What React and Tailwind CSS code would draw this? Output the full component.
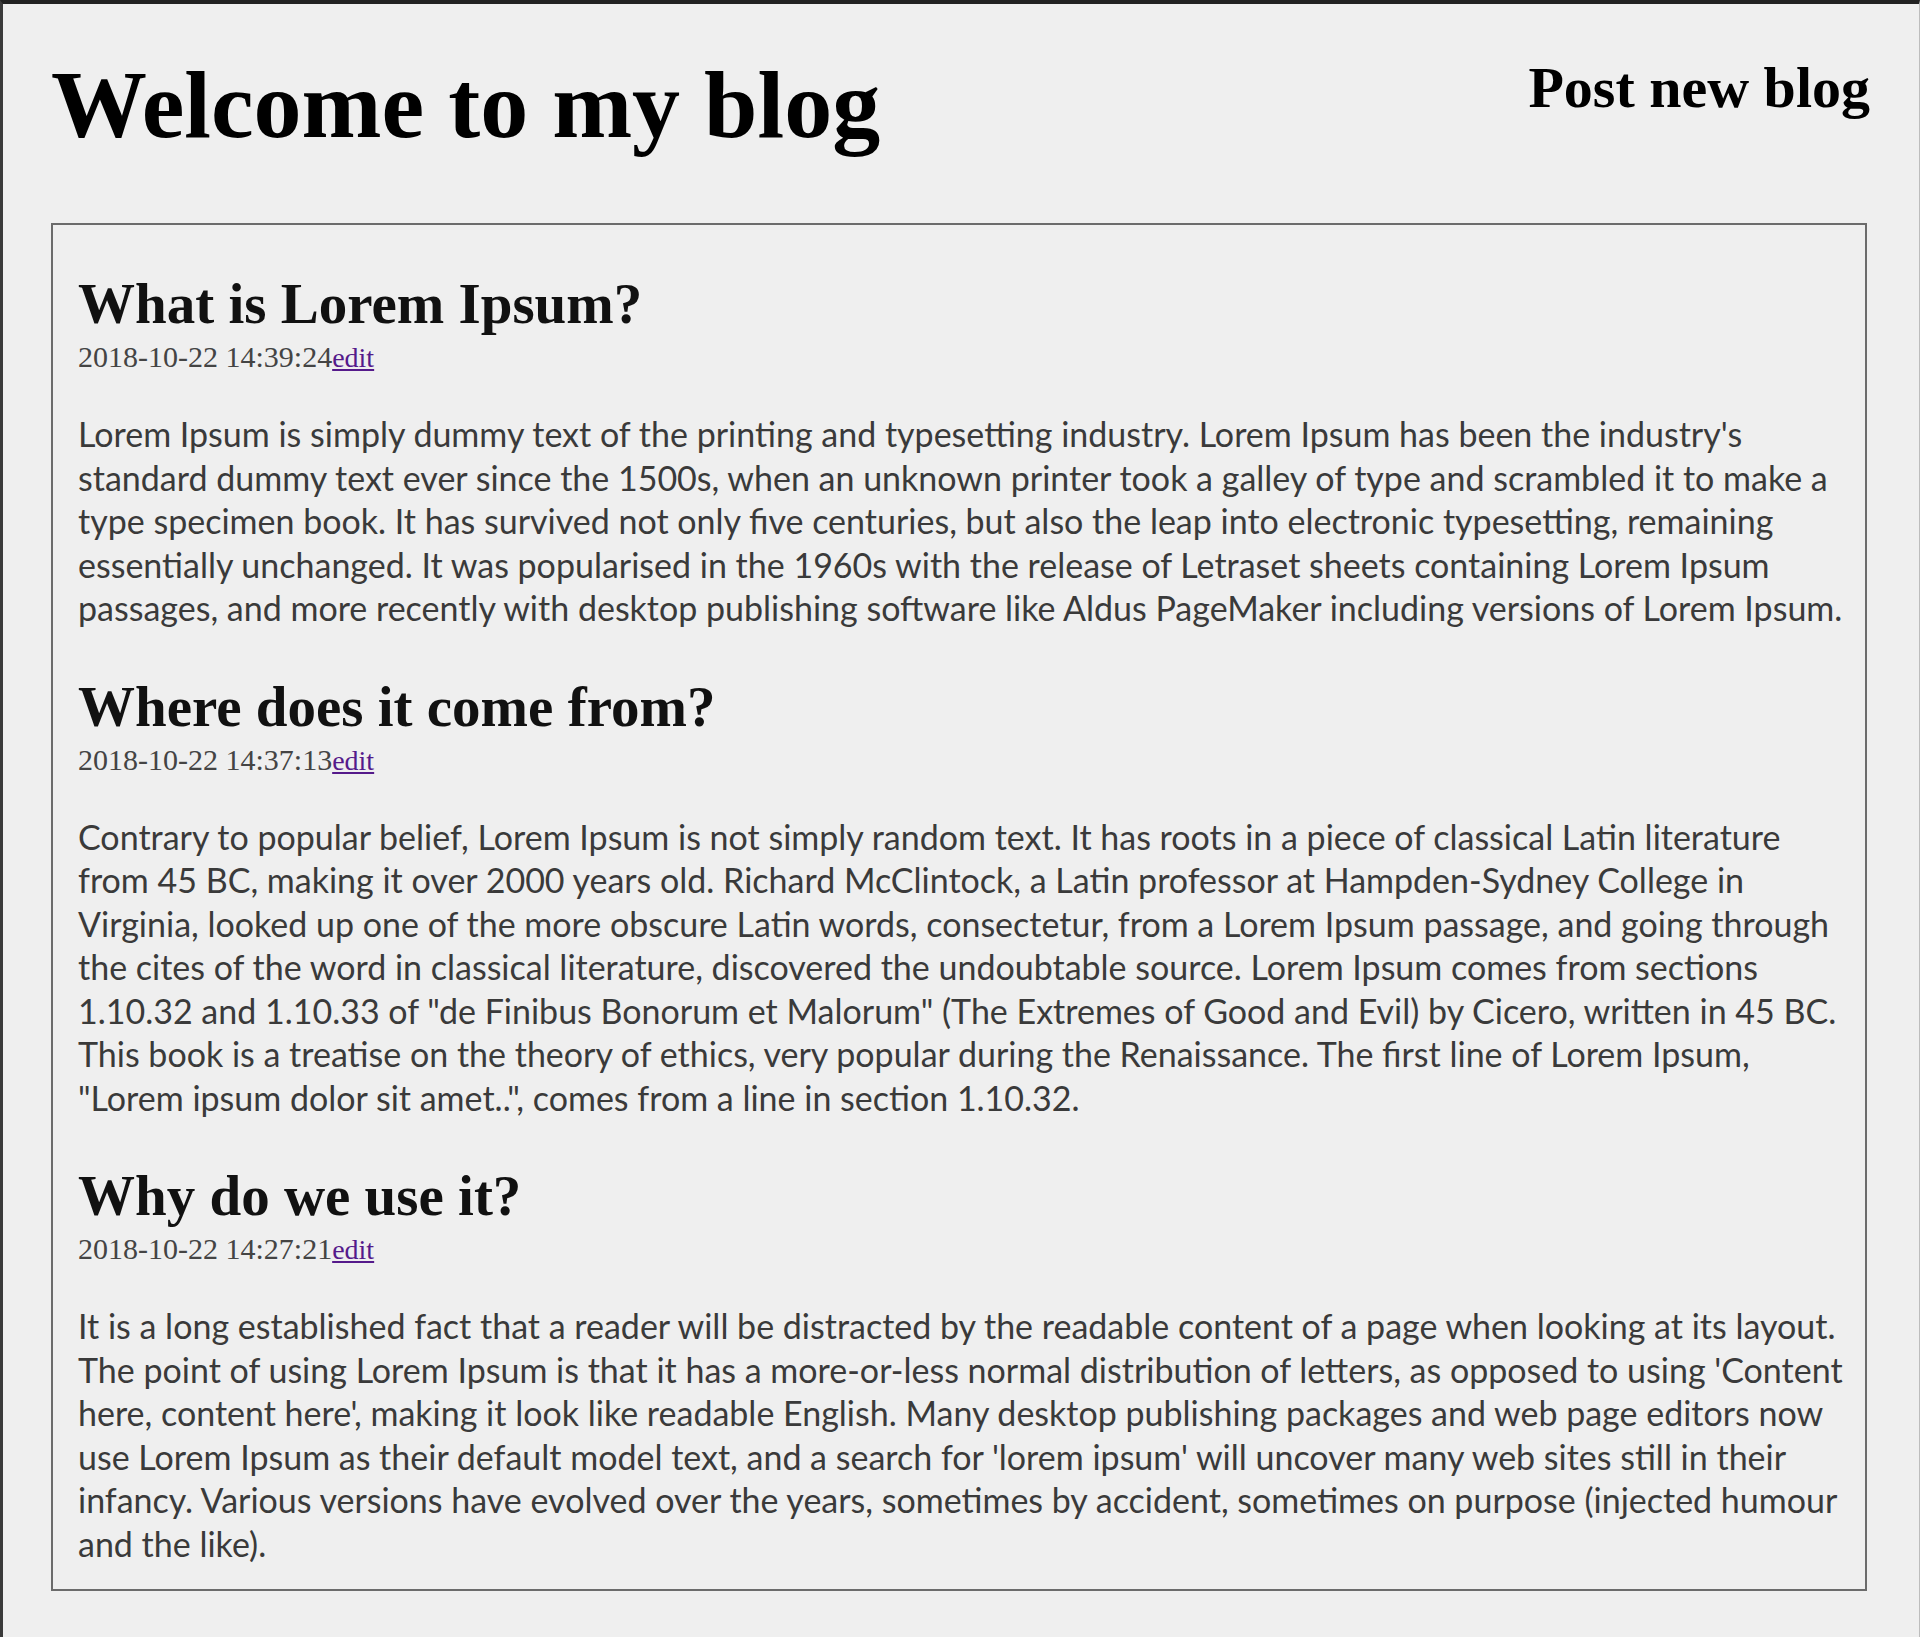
const posts = [
  {
    title: 'What is Lorem Ipsum?',
    date: '2018-10-22 14:39:24',
    lines: [
      "Lorem Ipsum is simply dummy text of the printing and typesetting industry. Lorem Ipsum has been the industry's",
      'standard dummy text ever since the 1500s, when an unknown printer took a galley of type and scrambled it to make a',
      'type specimen book. It has survived not only five centuries, but also the leap into electronic typesetting, remaining',
      'essentially unchanged. It was popularised in the 1960s with the release of Letraset sheets containing Lorem Ipsum',
      'passages, and more recently with desktop publishing software like Aldus PageMaker including versions of Lorem Ipsum.',
    ],
  },
  {
    title: 'Where does it come from?',
    date: '2018-10-22 14:37:13',
    lines: [
      'Contrary to popular belief, Lorem Ipsum is not simply random text. It has roots in a piece of classical Latin literature',
      'from 45 BC, making it over 2000 years old. Richard McClintock, a Latin professor at Hampden-Sydney College in',
      'Virginia, looked up one of the more obscure Latin words, consectetur, from a Lorem Ipsum passage, and going through',
      'the cites of the word in classical literature, discovered the undoubtable source. Lorem Ipsum comes from sections',
      '1.10.32 and 1.10.33 of "de Finibus Bonorum et Malorum" (The Extremes of Good and Evil) by Cicero, written in 45 BC.',
      'This book is a treatise on the theory of ethics, very popular during the Renaissance. The first line of Lorem Ipsum,',
      '"Lorem ipsum dolor sit amet..", comes from a line in section 1.10.32.',
    ],
  },
  {
    title: 'Why do we use it?',
    date: '2018-10-22 14:27:21',
    lines: [
      'It is a long established fact that a reader will be distracted by the readable content of a page when looking at its layout.',
      "The point of using Lorem Ipsum is that it has a more-or-less normal distribution of letters, as opposed to using 'Content",
      "here, content here', making it look like readable English. Many desktop publishing packages and web page editors now",
      "use Lorem Ipsum as their default model text, and a search for 'lorem ipsum' will uncover many web sites still in their",
      'infancy. Various versions have evolved over the years, sometimes by accident, sometimes on purpose (injected humour',
      'and the like).',
    ],
  },
]

function Post({ post, first }) {
  return (
    <article className={first ? '' : 'mt-[48px]'}>
      <h2 className="font-['Liberation_Serif',serif] text-[57px] font-bold leading-none text-[#111]">
        {post.title}
      </h2>
      <div className="mt-[10px] font-['Liberation_Serif',serif] text-[30px] leading-none text-[#444]">
        {post.date}
        <a href="#" className="text-[28px] text-[#551a8b] underline">
          edit
        </a>
      </div>
      <p className="mt-[40px] font-['Lato',sans-serif] text-[34px] leading-[43.5px] text-[#3a3a3a]">
        {post.lines.map((line, i) => (
          <span key={i} className="block whitespace-nowrap">
            {line}
          </span>
        ))}
      </p>
    </article>
  )
}

export default function App() {
  return (
    <div className="min-h-[1637px] bg-[#efefef] border-t-4 border-l-[3px] border-r border-t-[#222] border-l-[#3a3a3a] border-r-[#bdbdbd]">
      {/* header */}
      <header className="flex items-start justify-between pl-12 pr-[49px] pt-[53px]">
        <h1 className="font-['Liberation_Serif',serif] text-[96px] font-bold leading-none text-black">
          Welcome to my blog
        </h1>
        <a href="#" className="mt-[2px] font-['Liberation_Serif',serif] text-[58px] font-bold leading-none text-black">
          Post new blog
        </a>
      </header>

      <main className="ml-12 mr-[52px] mt-[70px] border-2 border-[#6b6b6b] pl-[25px] pb-[24px] pt-[50px]">
        {posts.map((post, i) => (
          <Post key={post.title} post={post} first={i === 0} />
        ))}
      </main>
    </div>
  )
}
